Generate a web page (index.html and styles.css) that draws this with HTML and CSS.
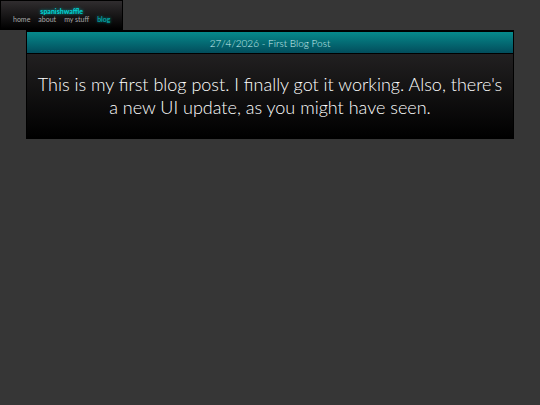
FILE: index.html
```html
<!DOCTYPE html>
<html lang="en">
<head>
<meta charset="utf-8">
<title>spanishwaffle - blog</title>
<link rel="stylesheet" href="styles.css">
</head>
<body>
<header class="site-header">
  <div class="site-name">spanishwaffle</div>
  <nav class="site-nav">
    <a href="#home">home</a>
    <a href="#about">about</a>
    <a href="#stuff">my stuff</a>
    <a href="#blog" class="current">blog</a>
  </nav>
</header>
<main>
  <article class="post">
    <h1 class="post-title">27/4/2026 - First Blog Post</h1>
    <p class="post-body">This is my first blog post. I finally got it working. Also, there's a new UI update, as you might have seen.</p>
  </article>
</main>
</body>
</html>
```
FILE: styles.css
```css
* {
  box-sizing: border-box;
}

body {
  margin: 0;
  background: #363636;
  color: #fff;
  font-family: Lato, "Liberation Sans", sans-serif;
  font-weight: 300;
}

.site-header {
  width: fit-content;
  padding: 6px 12px;
  border: 1px solid #000;
  background: linear-gradient(#302d2f, #000);
  font-size: 7px;
  line-height: 8px;
  text-align: center;
}

.site-name {
  color: #00d4d4;
  font-weight: 700;
  text-shadow: 0 0 3px #00b4b4;
}

.site-nav {
  display: flex;
  gap: 8px;
}

.site-nav a {
  color: #aaa;
  font-weight: 400;
  text-decoration: none;
}

.site-nav .current {
  color: #00b8b8;
  text-shadow: 0 0 3px #00b4b4;
}

.post {
  margin: 0 26px;
  border: 1px solid #000;
  border-top-width: 2px;
  background: linear-gradient(#2a2829, #000);
  text-align: center;
}

.post-title {
  margin: 0;
  padding: 4px 4px 3px;
  border-bottom: 1px solid #000;
  background: linear-gradient(#068a8c, #024d5c);
  color: #cdf0f0;
  font-size: 10px;
  font-weight: 300;
  line-height: 14px;
}

.post-body {
  margin: 0;
  padding: 19px 4px;
  font-size: 18px;
  line-height: 23px;
}
```
